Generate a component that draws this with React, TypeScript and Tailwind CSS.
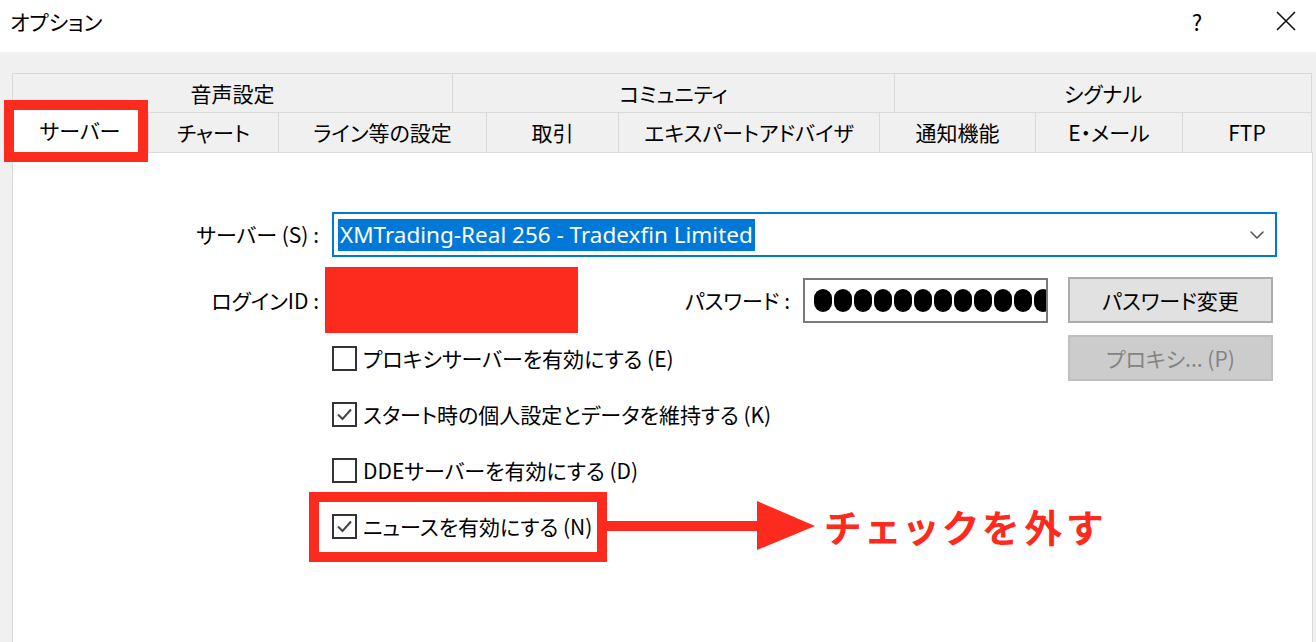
import { ChevronDown } from 'lucide-react';

const RED = 'bg-[#fd2a1e]';

const topTabs = [
  { label: '音声設定', w: 'w-[440px]' },
  { label: 'コミュニティ', w: 'w-[442px]' },
  { label: 'シグナル', w: 'w-[418px] border-r' },
];

const bottomTabs = [
  { label: 'チャート', w: 'w-[130px]' },
  { label: 'ライン等の設定', w: 'w-[208px]' },
  { label: '取引', w: 'w-[132px]' },
  { label: 'エキスパートアドバイザ', w: 'w-[261px]' },
  { label: '通知機能', w: 'w-[156px]' },
  { label: 'E・メール', w: 'w-[147px]' },
  { label: 'FTP', w: 'w-[130px] border-r' },
];

function CheckBox({ checked }: { checked?: boolean }) {
  return (
    <span className="flex h-[25px] w-[25px] shrink-0 items-center justify-center border-2 border-[#333333] bg-white">
      {checked && (
        <svg width="19" height="19" viewBox="0 0 19 19" fill="none">
          <polyline points="3,9.5 7.5,14 16,4.5" stroke="#444" strokeWidth="2" />
        </svg>
      )}
    </span>
  );
}

function CheckRow({ label, checked }: { label: string; checked?: boolean }) {
  return (
    <span className="flex items-center gap-[6px] whitespace-nowrap">
      <CheckBox checked={checked} />
      <span>{label}</span>
    </span>
  );
}

export default function App() {
  return (
    <div className="h-[642px] w-[1316px] overflow-hidden bg-[#f0f0f0] font-['Noto_Sans_CJK_JP',sans-serif] text-[21px] leading-none text-black [font-feature-settings:'palt']">
      {/* title bar */}
      <div className="flex h-[52px] items-center bg-white pl-[10px]">
        <span className="pb-[10px] text-[21px]">オプション</span>
        <span className="ml-auto flex w-[46px] justify-center pb-[10px] text-[22px]">?</span>
        <span className="ml-[43px] mr-[7px] flex w-[46px] justify-center pb-[10px]">
          <svg width="20" height="20" viewBox="0 0 20 20">
            <path d="M1 1 L19 19 M19 1 L1 19" stroke="#111" strokeWidth="1.6" />
          </svg>
        </span>
      </div>

      {/* tabs */}
      <div className="pl-[12px] pt-[21px]">
        <div className="flex h-[39px]">
          {topTabs.map((t) => (
            <div key={t.label} className={`flex items-center justify-center border-l border-t border-[#d9d9d9] ${t.w}`}>
              {t.label}
            </div>
          ))}
        </div>
        <div className="flex h-[40px]">
          <div className="relative z-10 -mt-[2px] flex h-[43px] w-[136px] items-center justify-center bg-white pb-[3px]">
            サーバー
            <span className="absolute -left-[8px] -top-[10px] h-[62px] w-[144px] border-[10px] border-[#fd2a1e]" />
          </div>
          {bottomTabs.map((t) => (
            <div key={t.label} className={`flex items-center justify-center border-l border-t border-[#d9d9d9] ${t.w}`}>
              {t.label}
            </div>
          ))}
        </div>
      </div>

      {/* panel */}
      <div className="ml-[12px] h-[500px] w-[1301px] border border-[#d9d9d9] bg-white">
        {/* server */}
        <div className="mt-[59px] flex h-[45px] items-center">
          <span className="w-[306px] text-right">サーバー (S) :</span>
          <div className="ml-[13px] flex h-[45px] w-[945px] items-center border-2 border-[#0078d7]">
            <span className="ml-[4px] bg-[#0078d7] px-[2px] font-['Noto_Sans',sans-serif] text-[22.5px] leading-[32px] text-white">
              XMTrading-Real 256 - Tradexfin Limited
            </span>
            <ChevronDown className="ml-auto mr-[6px] text-[#555]" size={24} strokeWidth={1.6} />
          </div>
        </div>

        {/* login / password */}
        <div className="mt-[10px] flex h-[66px] items-center">
          <span className="w-[306px] text-right">ログインID :</span>
          <div className={`ml-[6px] h-[66px] w-[253px] ${RED}`} />
          <span className="w-[212px] text-right">パスワード :</span>
          <div className="ml-[13px] flex h-[45px] w-[245px] items-center gap-[2px] overflow-hidden border-2 border-[#7a7a7a] pl-[9px]">
            {Array.from({ length: 13 }).map((_, i) => (
              <span key={i} className="h-[23px] w-[18px] shrink-0 rounded-full bg-black" />
            ))}
          </div>
          <button className="ml-[20px] h-[46px] w-[205px] border-2 border-[#adadad] bg-[#e1e1e1]">パスワード変更</button>
        </div>

        {/* options */}
        <div className="mt-[2px] flex flex-col gap-[10px] pl-[319px]">
          <div className="flex h-[46px] items-center">
            <div className="w-[736px]">
              <CheckRow label="プロキシサーバーを有効にする (E)" />
            </div>
            <button className="h-[46px] w-[205px] border-2 border-[#bfbfbf] bg-[#cccccc] text-[#838383]">プロキシ... (P)</button>
          </div>
          <div className="flex h-[46px] items-center">
            <CheckRow label="スタート時の個人設定とデータを維持する (K)" checked />
          </div>
          <div className="flex h-[46px] items-center">
            <CheckRow label="DDEサーバーを有効にする (D)" />
          </div>
          <div className="flex h-[46px] items-center">
            <div className="relative w-[275px]">
              <CheckRow label="ニュースを有効にする (N)" checked />
              <span className="absolute -left-[23px] -top-[22px] h-[70px] w-[298px] border-[10px] border-[#fd2a1e]" />
            </div>
            <svg width="208" height="50" viewBox="0 0 208 50" className="shrink-0">
              <rect x="0" y="20" width="152" height="10" fill="#fd2a1e" />
              <polygon points="150,0 208,25 150,49" fill="#fd2a1e" />
            </svg>
            <span className="ml-[10px] whitespace-nowrap text-[38px] font-bold tracking-[5.5px] text-[#fd2a1e]">チェックを外す</span>
          </div>
        </div>
      </div>
    </div>
  );
}
